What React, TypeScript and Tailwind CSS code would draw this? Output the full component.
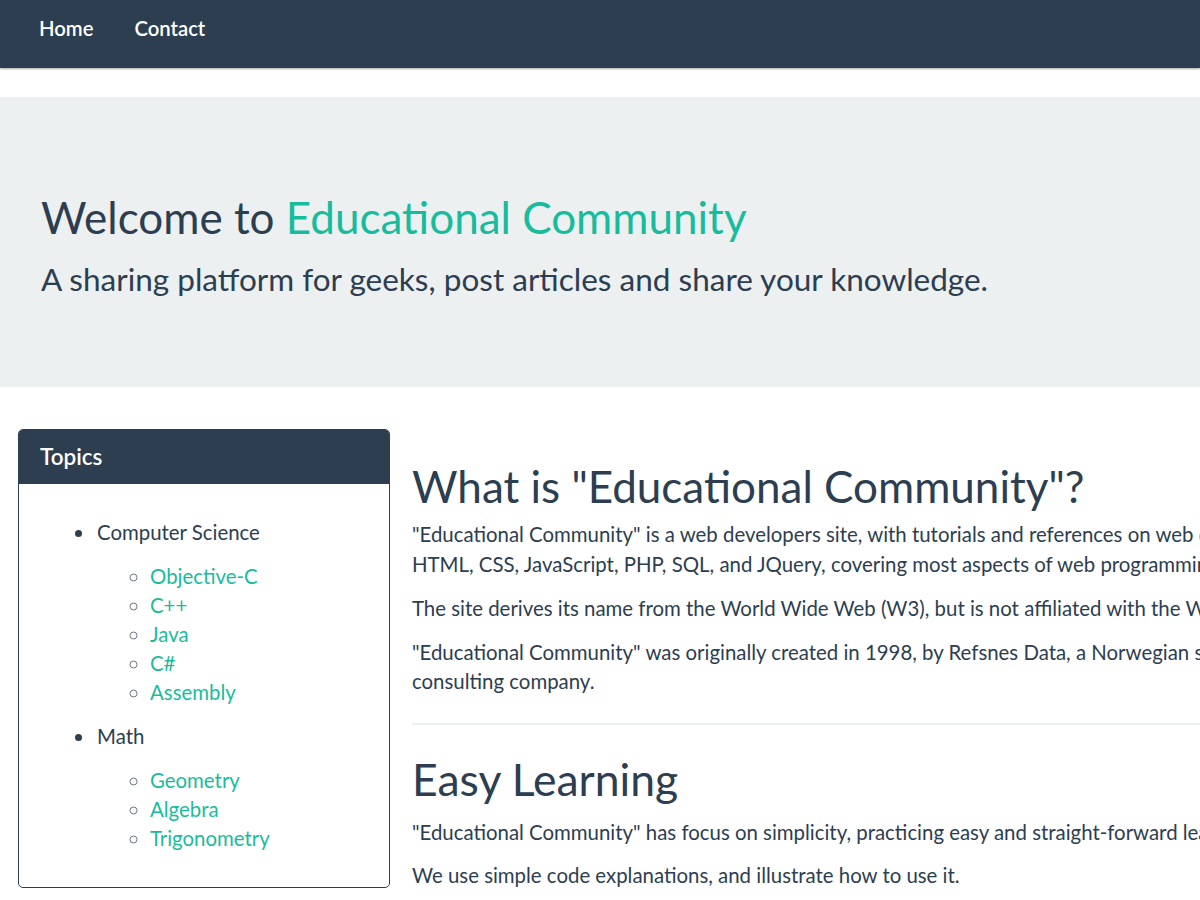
import React from 'react';

const topics = [
  { name: 'Computer Science', items: ['Objective-C', 'C++', 'Java', 'C#', 'Assembly'] },
  { name: 'Math', items: ['Geometry', 'Algebra', 'Trigonometry'] },
];

const App: React.FC = () => {
  return (
    <div className="w-[1200px] h-[900px] overflow-hidden bg-white text-[#2c3e50] font-['Lato','Noto_Sans',sans-serif] antialiased">
      <nav className="h-[68px] bg-[#2c3e50] flex items-start gap-[41px] pl-[39px] pt-[14px] shadow-[0_1px_2px_rgba(0,0,0,0.35)]">
        <a className="text-white text-[20.3px] leading-[29px] font-semibold">Home</a>
        <a className="text-white text-[20.3px] leading-[29px] font-semibold">Contact</a>
      </nav>

      <section className="mt-[29px] h-[290px] bg-[#ecf0f1] pl-[41px] pt-[95px]">
        <h1 className="text-[44px] leading-[50px]">
          Welcome to <span className="text-[#18bc9c]">Educational Community</span>
        </h1>
        <p className="mt-[17px] text-[31.5px] leading-[40px]">
          A sharing platform for geeks, post articles and share your knowledge.
        </p>
      </section>

      <div className="flex items-start gap-[22px] pl-[18px] mt-[42px]">
        <div className="w-[372px] shrink-0 rounded-[5px] border-[1.5px] border-[#2c3e50] overflow-hidden">
          <div className="h-[54px] bg-[#2c3e50] px-[21px] flex items-center">
            <h3 className="text-white text-[22.5px] font-semibold">Topics</h3>
          </div>
          <div className="pl-5 pr-5 pt-[34px] pb-[19px]">
            <ul className="list-disc pl-[56px] text-[20.4px] leading-[29px]">
              {topics.map((t) => (
                <li key={t.name} className="pl-[2px]">
                  {t.name}
                  <ul className="list-[circle] pl-[53px] my-[15px] marker:text-[#6b7785]">
                    {t.items.map((it) => (
                      <li key={it}>
                        <a className="text-[#18bc9c]">{it}</a>
                      </li>
                    ))}
                  </ul>
                </li>
              ))}
            </ul>
          </div>
        </div>

        <main className="flex-1 whitespace-nowrap text-[20.4px] leading-[29.5px]">
          <h2 className="mt-[33px] mb-[10px] text-[44px] leading-[48px]">What is "Educational Community"?</h2>
          <p className="mb-[14.5px]">
            "Educational Community" is a web developers site, with tutorials and references on web development languages such as
            <br />
            HTML, CSS, JavaScript, PHP, SQL, and JQuery, covering most aspects of web programming.
          </p>
          <p className="mb-[14.5px]">The site derives its name from the World Wide Web (W3), but is not affiliated with the W3C.</p>
          <p>
            "Educational Community" was originally created in 1998, by Refsnes Data, a Norwegian software development and
            <br />
            consulting company.
          </p>
          <hr className="mt-[26px] border-0 border-t-2 border-[#ecf0f1]" />
          <h2 className="mt-[30px] mb-[15px] text-[44.5px] leading-[48px]">Easy Learning</h2>
          <p className="mb-[14px]">
            "Educational Community" has focus on simplicity, practicing easy and straight-forward learning.
          </p>
          <p>We use simple code explanations, and illustrate how to use it.</p>
        </main>
      </div>
    </div>
  );
};

export default App;
